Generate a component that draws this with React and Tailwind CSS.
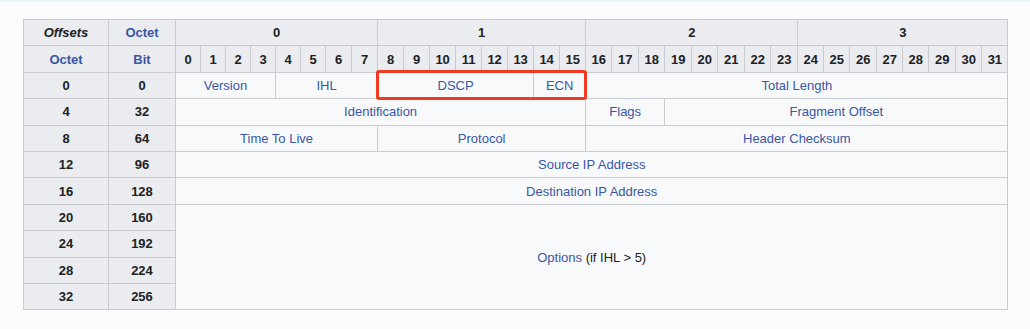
const BIT_WIDTHS = [
  25, 25, 25, 25, 25, 25, 26, 26,
  26, 26, 26, 26, 26, 26, 26, 26,
  26, 27, 26, 27, 26, 27, 26, 27,
  26, 26, 27, 26, 26, 27, 26, 26,
]

const ROWS = [
  { octet: 0, bit: 0, fields: [['Version', 4], ['IHL', 4], ['DSCP', 6], ['ECN', 2], ['Total Length', 16]] },
  { octet: 4, bit: 32, fields: [['Identification', 16], ['Flags', 3], ['Fragment Offset', 13]] },
  { octet: 8, bit: 64, fields: [['Time To Live', 8], ['Protocol', 8], ['Header Checksum', 16]] },
  { octet: 12, bit: 96, fields: [['Source IP Address', 32]] },
  { octet: 16, bit: 128, fields: [['Destination IP Address', 32]] },
  { octet: 20, bit: 160, options: true },
  { octet: 24, bit: 192 },
  { octet: 28, bit: 224 },
  { octet: 32, bit: 256 },
]

const th = 'border border-[#c8ccd1] bg-[#eaecf0] font-bold text-center p-0'
const td = 'border border-[#c8ccd1] bg-[#f8f9fa] text-center text-[#3857a5] p-0'

export default function App() {
  return (
    <div
      className="w-[1030px] h-[329px] bg-[#fbfcfd] border-t-2 border-[#e3f5f8] pl-[23px] pt-[17px] text-[13px] text-[#202122]"
      style={{ fontFamily: '"Liberation Sans", Arial, sans-serif' }}
    >
      <div className="relative w-[984px]">
        <table className="table-fixed border-collapse w-[984px] leading-none">
          <colgroup>
            <col className="w-[85px]" />
            <col className="w-[67px]" />
            {BIT_WIDTHS.map((w, i) => (
              <col key={i} style={{ width: w }} />
            ))}
          </colgroup>
          <tbody>
            <tr className="h-[26.4px]">
              <th className={`${th} italic`}>Offsets</th>
              <th className={`${th} text-[#3857a5]`}>Octet</th>
              {[0, 1, 2, 3].map(o => (
                <th key={o} colSpan={8} className={th}>{o}</th>
              ))}
            </tr>
            <tr className="h-[26.4px]">
              <th className={`${th} text-[#3857a5]`}>Octet</th>
              <th className={`${th} text-[#3857a5]`}>Bit</th>
              {BIT_WIDTHS.map((_, i) => (
                <th key={i} className={th}>{i}</th>
              ))}
            </tr>
            {ROWS.map(r => (
              <tr key={r.octet} className="h-[26.4px]">
                <th className={th}>{r.octet}</th>
                <th className={th}>{r.bit}</th>
                {r.fields && r.fields.map(([name, span]) => (
                  <td key={name} colSpan={span} className={td}>{name}</td>
                ))}
                {r.options && (
                  <td colSpan={32} rowSpan={4} className={td}>
                    Options <span className="text-[#202122]">(if IHL &gt; 5)</span>
                  </td>
                )}
              </tr>
            ))}
          </tbody>
        </table>
        <div className="absolute left-[353px] top-[51px] w-[211px] h-[30px] border-[3px] border-[#f23a22] rounded-[3px]" />
      </div>
    </div>
  )
}
